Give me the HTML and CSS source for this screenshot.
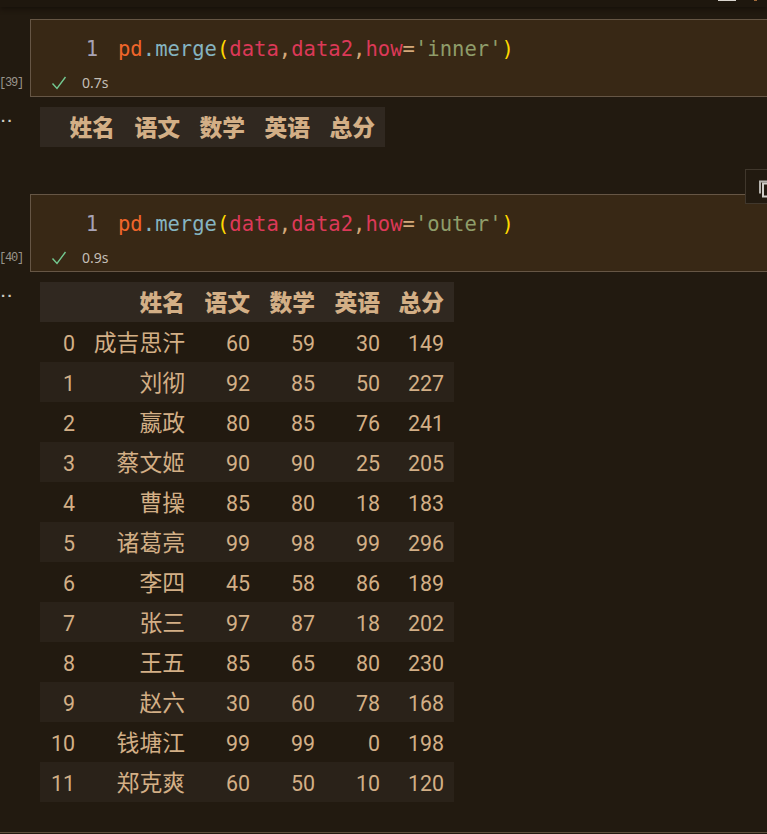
FILE: index.html
```html
<!DOCTYPE html>
<html lang="zh">
<head>
<meta charset="utf-8">
<title>pd.merge</title>
<link rel="stylesheet" href="styles.css">
</head>
<body>
<div class="topbar"><span class="tick tick-a"></span><span class="tick tick-b"></span></div>
<main class="notebook">
  <section class="cell">
    <div class="prompt">[39]</div>
    <div class="code"><span class="ln">1</span><code><span class="c-o">pd</span><span class="c-d">.</span><span class="c-b">merge</span><span class="c-y">(</span><span class="c-r">data</span><span class="c-p">,</span><span class="c-r">data2</span><span class="c-p">,</span><span class="c-r">how</span><span class="c-p">=</span><span class="c-g">'inner'</span><span class="c-y">)</span></code></div>
    <div class="status">
      <svg class="check" viewBox="0 0 16 16" width="16" height="16"><path d="M1.5 8.5 L6 13.5 L14.5 2" fill="none" stroke="#73c991" stroke-width="1.4"/></svg>
      <span>0.7s</span>
    </div>
  </section>
  <section class="output output-a">
    <div class="dots">··</div>
    <table class="df">
      <colgroup><col class="w85"><col class="w65"><col class="w65"><col class="w65"><col class="w65"></colgroup>
      <thead><tr><th>姓名</th><th>语文</th><th>数学</th><th>英语</th><th>总分</th></tr></thead>
    </table>
  </section>
  <section class="cell cell-b">
    <div class="prompt">[40]</div>
    <div class="copy"><svg viewBox="0 0 22 22" width="22" height="22"><path d="M4 15.5 V3.5 H12" fill="none" stroke="#b5b2ad" stroke-width="2"/><rect x="7" y="5.5" width="12" height="13" fill="none" stroke="#d0cdc8" stroke-width="2"/></svg></div>
    <div class="code"><span class="ln">1</span><code><span class="c-o">pd</span><span class="c-d">.</span><span class="c-b">merge</span><span class="c-y">(</span><span class="c-r">data</span><span class="c-p">,</span><span class="c-r">data2</span><span class="c-p">,</span><span class="c-r">how</span><span class="c-p">=</span><span class="c-g">'outer'</span><span class="c-y">)</span></code></div>
    <div class="status">
      <svg class="check" viewBox="0 0 16 16" width="16" height="16"><path d="M1.5 8.5 L6 13.5 L14.5 2" fill="none" stroke="#73c991" stroke-width="1.4"/></svg>
      <span>0.9s</span>
    </div>
  </section>
  <section class="output output-b">
    <div class="dots">··</div>
    <table class="df">
      <colgroup><col class="w45"><col class="w110"><col class="w65"><col class="w65"><col class="w65"><col class="w64"></colgroup>
      <thead><tr><th></th><th>姓名</th><th>语文</th><th>数学</th><th>英语</th><th>总分</th></tr></thead>
      <tbody>
        <tr><td>0</td><td class="name">成吉思汗</td><td>60</td><td>59</td><td>30</td><td>149</td></tr>
        <tr><td>1</td><td class="name">刘彻</td><td>92</td><td>85</td><td>50</td><td>227</td></tr>
        <tr><td>2</td><td class="name">嬴政</td><td>80</td><td>85</td><td>76</td><td>241</td></tr>
        <tr><td>3</td><td class="name">蔡文姬</td><td>90</td><td>90</td><td>25</td><td>205</td></tr>
        <tr><td>4</td><td class="name">曹操</td><td>85</td><td>80</td><td>18</td><td>183</td></tr>
        <tr><td>5</td><td class="name">诸葛亮</td><td>99</td><td>98</td><td>99</td><td>296</td></tr>
        <tr><td>6</td><td class="name">李四</td><td>45</td><td>58</td><td>86</td><td>189</td></tr>
        <tr><td>7</td><td class="name">张三</td><td>97</td><td>87</td><td>18</td><td>202</td></tr>
        <tr><td>8</td><td class="name">王五</td><td>85</td><td>65</td><td>80</td><td>230</td></tr>
        <tr><td>9</td><td class="name">赵六</td><td>30</td><td>60</td><td>78</td><td>168</td></tr>
        <tr><td>10</td><td class="name">钱塘江</td><td>99</td><td>99</td><td>0</td><td>198</td></tr>
        <tr><td>11</td><td class="name">郑克爽</td><td>60</td><td>50</td><td>10</td><td>120</td></tr>
      </tbody>
    </table>
  </section>
  <div class="bottom-line"></div>
</main>
</body>
</html>
```
FILE: styles.css
```css
* { box-sizing: border-box; }
html, body { margin: 0; height: 100%; overflow: hidden; }
body { background: #221a10; width: 767px; height: 834px; position: relative; }

.topbar { height: 7px; background: #1e170e; position: relative; box-shadow: 0 2px 5px #16100a; }
.tick { position: absolute; top: 0; height: 1px; }
.tick-a { left: 718px; width: 18px; background: #d8d4ce; }
.tick-b { left: 754px; width: 3px; background: #a06a3a; }

.notebook { padding-top: 12px; }

.cell { position: relative; margin-left: 30px; width: 760px; height: 78px; background: #382815; border: 1px solid #665645; }
.cell-b { margin-top: 47px; }

.prompt { position: absolute; left: -32px; top: 55px; font: 12px/16px "Liberation Mono", monospace; letter-spacing: -1.2px; color: #9a958c; }

.code { display: flex; height: 55px; padding-top: 17px; font: 20.55px/24px "DejaVu Sans Mono", monospace; }
.ln { width: 67px; text-align: right; color: #a8a3b5; }
.code code { margin-left: 20px; font: inherit; white-space: pre; }
.c-o { color: #f0652a; }
.c-d { color: #85b4c0; }
.c-b { color: #85b4c0; }
.c-y { color: #ffd700; }
.c-r { color: #dc3958; }
.c-p { color: #d3a87a; }
.c-g { color: #8f9d6a; }

.status { display: flex; align-items: center; gap: 16px; padding-left: 20px; height: 16px; font: 14px/16px "Noto Sans", sans-serif; color: #c4bfb7; }
.status span { margin-left: -1px; }

.output { position: relative; margin-left: 40px; }
.output-a { margin-top: 10px; }
.output-b { margin-top: 10px; }

.dots { position: absolute; left: -39px; top: 6px; font: 700 15px/16px "Liberation Sans", sans-serif; letter-spacing: 1.5px; color: #d0ccc4; }

.df { border-collapse: collapse; table-layout: fixed; font-family: "Noto Sans CJK SC", sans-serif; color: #d3af86; }
.w45 { width: 45px; }
.w64 { width: 64px; }
.w65 { width: 65px; }
.w85 { width: 85px; }
.w110 { width: 110px; }
.df th, .df td { height: 40px; padding: 0 10px 0 0; text-align: right; white-space: nowrap; }
.df th { font-size: 22.8px; line-height: 38px; font-weight: 900; background: #302820; }
.df td { font: 21.4px/36px "Roboto", sans-serif; padding-top: 4px; }
.df td.name { font: 22.8px/40px "Noto Sans CJK SC", sans-serif; padding-top: 0; }
.df tbody tr:nth-child(even) { background: #2a2219; }

.bottom-line { position: absolute; left: 0; top: 832px; width: 767px; height: 1px; background: #5d4e3c; }

.copy { position: absolute; left: 714px; top: -26px; width: 40px; height: 35px; background: #221a10; border: 1px solid #40372c; padding: 8px 0 0 10px; z-index: 2; }
```
